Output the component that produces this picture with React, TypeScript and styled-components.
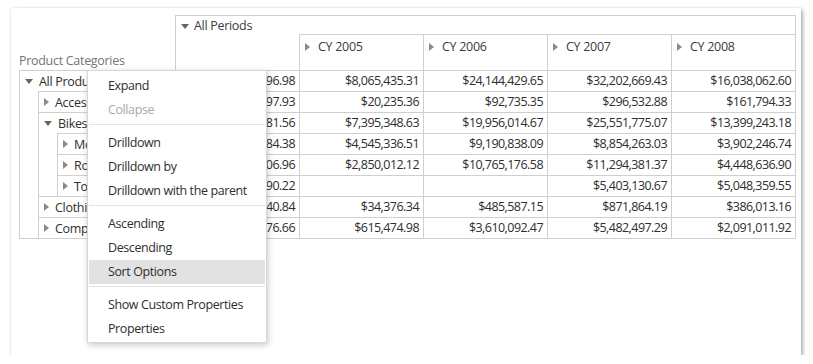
import styled, { createGlobalStyle } from "styled-components";

const GlobalStyle = createGlobalStyle`
  html, body {
    margin: 0;
    padding: 0;
    background: #ffffff;
  }
  body {
    font-family: "Open Sans", "Liberation Sans", sans-serif;
    color: #2e2e2e;
  }
  * {
    box-sizing: border-box;
  }
`;

const years = ["CY 2005", "CY 2006", "CY 2007", "CY 2008"];

const rows = [
  ["$80,450,596.98", "$8,065,435.31", "$24,144,429.65", "$32,202,669.43", "$16,038,062.60"],
  ["$571,297.93", "$20,235.36", "$92,735.35", "$296,532.88", "$161,794.33"],
  ["$66,302,381.56", "$7,395,348.63", "$19,956,014.67", "$25,551,775.07", "$13,399,243.18"],
  ["$26,492,684.38", "$4,545,336.51", "$9,190,838.09", "$8,854,263.03", "$3,902,246.74"],
  ["$29,358,206.96", "$2,850,012.12", "$10,765,176.58", "$11,294,381.37", "$4,448,636.90"],
  ["$10,451,490.22", "", "", "$5,403,130.67", "$5,048,359.55"],
  ["$1,777,840.84", "$34,376.34", "$485,587.15", "$871,864.19", "$386,013.16"],
  ["$11,799,076.66", "$615,474.98", "$3,610,092.47", "$5,482,497.29", "$2,091,011.92"],
];

const menu = [
  [{ label: "Expand" }, { label: "Collapse", disabled: true }],
  [{ label: "Drilldown" }, { label: "Drilldown by" }, { label: "Drilldown with the parent" }],
  [{ label: "Ascending" }, { label: "Descending" }, { label: "Sort Options", active: true }],
  [{ label: "Show Custom Properties" }, { label: "Properties" }],
];

const App = () => {
  return (
    <Page>
      <GlobalStyle />
      <Card>
        <Pivot>
          <AxisTitle>Product Categories</AxisTitle>
          <ColumnHead>
            <PeriodsTitle>
              <Caret open />
              All Periods
            </PeriodsTitle>
            <YearRow>
              <YearSpacer />
              {years.map((y) => (
                <YearCell key={y}>
                  <Caret />
                  {y}
                </YearCell>
              ))}
            </YearRow>
          </ColumnHead>

          <Tree>
            <TreeRow>
              <Caret open />
              <Label>All Products</Label>
            </TreeRow>
            <Group>
              <TreeRow>
                <Caret />
                <Label>Accessories</Label>
              </TreeRow>
              <TreeRow>
                <Caret open />
                <Label>Bikes</Label>
              </TreeRow>
              <Group>
                <TreeRow>
                  <Caret />
                  <Label>Mountain Bikes</Label>
                </TreeRow>
                <TreeRow>
                  <Caret />
                  <Label>Road Bikes</Label>
                </TreeRow>
                <TreeRow>
                  <Caret />
                  <Label>Touring Bikes</Label>
                </TreeRow>
              </Group>
              <TreeRow>
                <Caret />
                <Label>Clothing</Label>
              </TreeRow>
              <TreeRow>
                <Caret />
                <Label>Components</Label>
              </TreeRow>
            </Group>
          </Tree>

          <Data>
            {rows.map((r, i) => (
              <DataRow key={i}>
                {r.map((v, j) => (
                  <DataCell key={j}>{v}</DataCell>
                ))}
              </DataRow>
            ))}
          </Data>
        </Pivot>

        <Menu>
          {menu.map((group, gi) => (
            <div key={gi}>
              {gi > 0 && <Separator />}
              {group.map((item) => (
                <MenuItem
                  key={item.label}
                  $disabled={item.disabled}
                  $active={item.active}
                >
                  {item.label}
                </MenuItem>
              ))}
            </div>
          ))}
        </Menu>
      </Card>
    </Page>
  );
};

export default App;

const Page = styled.div`
  padding: 8px 0 0 11px;
`;

const Card = styled.div`
  position: relative;
  width: 790px;
  height: 347px;
  background: #ffffff;
  padding: 7px 0 0 8px;
  box-shadow: 0 0 2px rgba(0, 0, 0, 0.12), 2px 2px 4px rgba(0, 0, 0, 0.3);
`;

const Pivot = styled.div`
  display: grid;
  grid-template-columns: 156px 621px;
  grid-template-rows: 55px auto;
  font-size: 12.5px;
  letter-spacing: -0.3px;
`;

const AxisTitle = styled.div`
  align-self: end;
  color: #757575;
  line-height: 16px;
  padding-bottom: 1px;
  white-space: nowrap;
`;

const ColumnHead = styled.div`
  border: 1px solid #cfcfcf;
  border-bottom: none;
  display: flex;
  flex-direction: column;
  color: #3c3c3c;
`;

const PeriodsTitle = styled.div`
  height: 18px;
  line-height: 18px;
  padding: 2px 0 0 5px;
  display: flex;
  align-items: center;
`;

const YearRow = styled.div`
  display: flex;
  height: 36px;
`;

const YearSpacer = styled.div`
  width: 123px;
`;

const YearCell = styled.div`
  width: 124px;
  border-left: 1px solid #cfcfcf;
  border-top: 1px solid #cfcfcf;
  padding: 3px 0 0 5px;
  line-height: 17px;
  display: flex;
  align-items: flex-start;
  & > span {
    margin-top: 5px;
  }
`;

const Caret = styled.span<{ open?: boolean }>`
  display: inline-block;
  flex: none;
  width: 0;
  height: 0;
  margin-right: ${(p) => (p.open ? "5px" : "8px")};
  border-style: solid;
  border-color: transparent;
  ${(p) =>
    p.open
      ? `border-width: 5px 4px 0 4px; border-top-color: #666666;`
      : `border-width: 4px 0 4px 5px; border-left-color: #8a8a8a;`}
`;

const Tree = styled.div`
  border-left: 1px solid #cfcfcf;
  border-bottom: 1px solid #cfcfcf;
  overflow: hidden;
`;

const Group = styled.div`
  margin-left: 18px;
  border-left: 1px solid #cfcfcf;
`;

const TreeRow = styled.div`
  height: 21px;
  border-top: 1px solid #cfcfcf;
  display: flex;
  align-items: center;
  padding-left: 5px;
  white-space: nowrap;
  & > span:first-child {
    margin-right: 5px;
  }
`;

const Label = styled.div`
  padding-left: 1px;
  color: #2e2e2e;
`;

const Data = styled.div`
  border-bottom: 1px solid #cfcfcf;
  border-right: 1px solid #cfcfcf;
`;

const DataRow = styled.div`
  display: flex;
  height: 21px;
  border-top: 1px solid #cfcfcf;
`;

const DataCell = styled.div`
  width: 124px;
  border-left: 1px solid #cfcfcf;
  text-align: right;
  padding-right: 4px;
  line-height: 20px;
  letter-spacing: -0.55px;
  color: #2e2e2e;
  white-space: nowrap;
`;

const Menu = styled.div`
  position: absolute;
  left: 76px;
  top: 62px;
  width: 180px;
  background: #ffffff;
  border: 1px solid #d6d6d6;
  padding: 3px 1px 1px 1px;
  box-shadow: 1px 2px 6px rgba(0, 0, 0, 0.22);
  font-size: 12.5px;
  letter-spacing: -0.4px;
`;

const Separator = styled.div`
  height: 1px;
  margin: 2px 0 6px;
  background: #e3e3e3;
`;

const MenuItem = styled.div<{ $disabled?: boolean; $active?: boolean }>`
  height: 24px;
  line-height: 24px;
  padding-left: 19px;
  white-space: nowrap;
  color: ${(p) => (p.$disabled ? "#a9a9a9" : "#2e2e2e")};
  background: ${(p) => (p.$active ? "#e2e2e2" : "transparent")};
`;
